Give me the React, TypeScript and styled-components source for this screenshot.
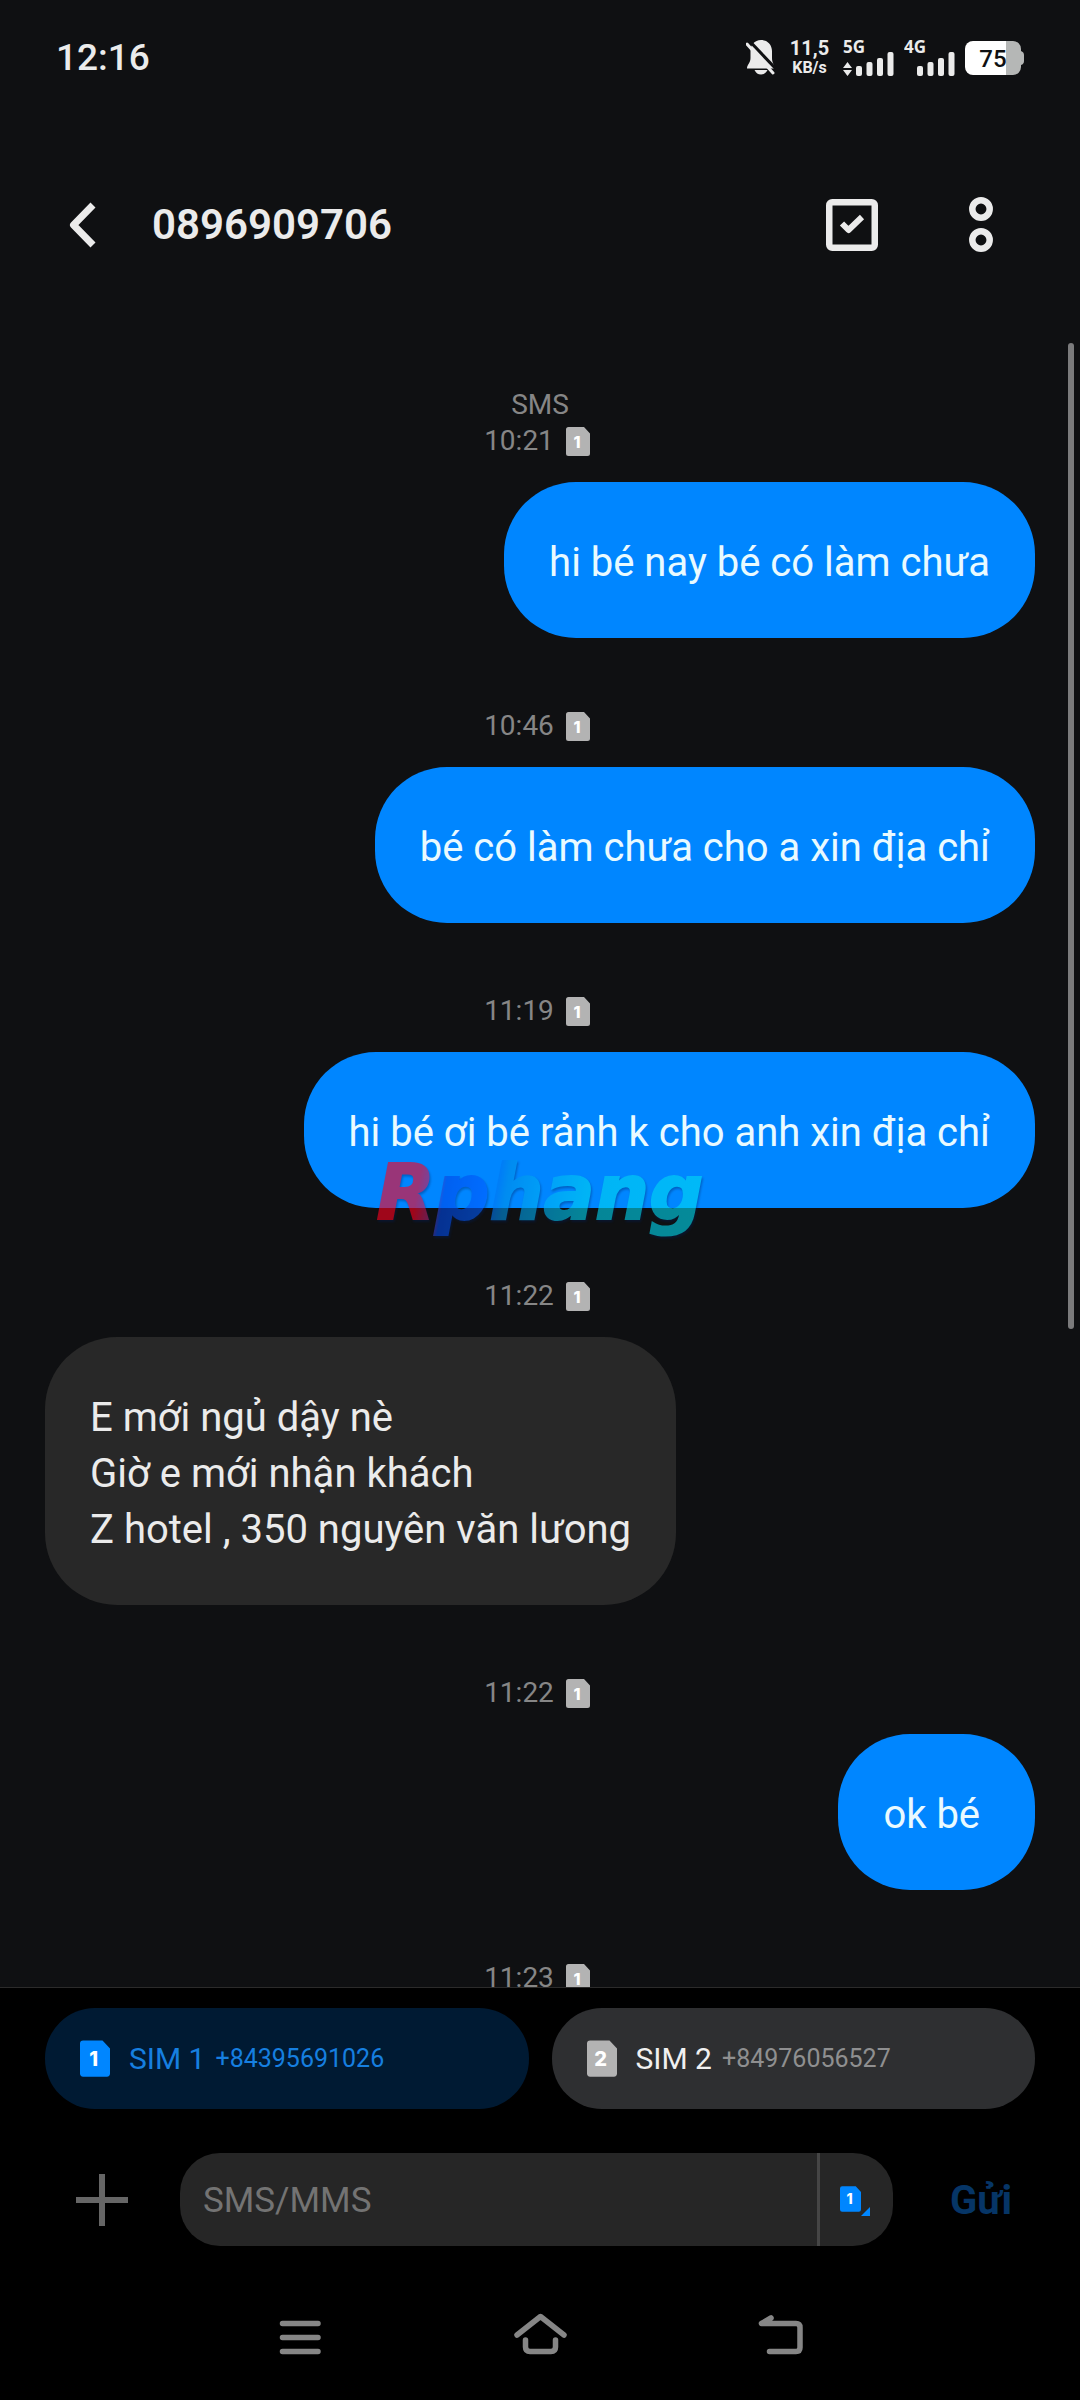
import React from "react";
import styled, { createGlobalStyle } from "styled-components";

const color = {
  page: "#0f1012",
  ink: "#ebebeb",
  muted: "#868686",
  accent: "#0086ff",
  grey: "#b3b3b3",
};

const GlobalStyle = createGlobalStyle`
  *, *::before, *::after { box-sizing: border-box; }
  body {
    margin: 0;
    background: ${color.page};
    color: ${color.ink};
    font-family: Roboto, "Noto Sans", sans-serif;
  }
  button, input { font: inherit; color: inherit; border: 0; background: none; padding: 0; margin: 0; }
  svg { display: block; flex: none; }
  h1, p { margin: 0; }
`;

const Page = styled.div`
  position: relative;
  display: flex;
  flex-direction: column;
  height: 100vh;
  overflow: hidden;
`;

const StatusBar = styled.div`
  display: flex;
  align-items: center;
  flex: none;
  height: 115px;
  padding: 0 56px;
`;

const Clock = styled.time`
  flex: 1;
  font-size: 37px;
  font-weight: 500;
  line-height: 44px;
`;

const StatusIcons = styled.div`
  display: flex;
  align-items: center;
  gap: 10px;
`;

const NetSpeed = styled.div`
  display: flex;
  flex-direction: column;
  align-items: center;
  width: 47px;
  font-weight: 700;
  font-size: 16px;
  line-height: 20px;
`;

const NetValue = styled.span`
  font-size: 20px;
`;

const Header = styled.header`
  display: flex;
  align-items: center;
  flex: none;
  height: 228px;
  padding: 0 35px 8px 45px;
`;

const IconButton = styled.button<{ $width: number }>`
  display: flex;
  align-items: center;
  justify-content: center;
  flex: none;
  width: ${(p) => p.$width}px;
  height: 80px;
`;

const Title = styled.h1`
  flex: 1;
  margin-left: 33px;
  font-size: 42px;
  font-weight: 600;
  line-height: 50px;
`;

const Thread = styled.main`
  position: relative;
  flex: 1;
  min-height: 0;
  overflow: hidden;
  display: flex;
  flex-direction: column;
  gap: 70px;
  padding: 44px 45px 0;
`;

const ScrollThumb = styled.div`
  position: absolute;
  top: 0;
  right: 6px;
  width: 6px;
  height: 60%;
  border-radius: 3px;
  background: #7b7b7c;
`;

const Message = styled.article`
  display: flex;
  flex-direction: column;
  flex: none;
`;

const Meta = styled.div`
  display: flex;
  flex-direction: column;
  align-items: center;
  margin-bottom: 23px;
  color: ${color.muted};
  font-size: 28px;
  line-height: 36px;
`;

const Stamp = styled.div`
  display: flex;
  align-items: center;
  gap: 12px;
  padding-right: 6px;
`;

const Bubble = styled.p<{ $mine: boolean }>`
  align-self: ${(p) => (p.$mine ? "flex-end" : "flex-start")};
  padding: 53px 45px 47px;
  border-radius: 72px;
  background: ${(p) => (p.$mine ? color.accent : "#282828")};
  color: ${(p) => (p.$mine ? "#e9faff" : color.ink)};
  font-size: 40px;
  line-height: 56px;
  white-space: pre-line;
`;

const Footer = styled.footer`
  flex: none;
  border-top: 1px solid #2b2b2b;
  background: #000;
  padding-top: 20px;
`;

const SimRow = styled.div`
  display: grid;
  grid-template-columns: 1fr 1fr;
  gap: 23px;
  padding: 0 45px;
`;

const SimChip = styled.button<{ $active: boolean }>`
  display: flex;
  align-items: center;
  height: 101px;
  padding: 0 35px;
  border-radius: 50px;
  background: ${(p) => (p.$active ? "#001a33" : "#2e2f31")};
  color: ${(p) => (p.$active ? "#167fe0" : "#f0f0f0")};
  font-size: 30px;
  line-height: 36px;
`;

const SimName = styled.span`
  margin: 0 10px 0 19px;
`;

const SimNumber = styled.span<{ $active: boolean }>`
  color: ${(p) => (p.$active ? "inherit" : "#8f8f90")};
  font-size: 25px;
`;

const Compose = styled.form`
  display: flex;
  align-items: center;
  gap: 21px;
  margin-top: 44px;
  padding: 0 32px 0 45px;
`;

const Field = styled.div`
  display: flex;
  flex: 1;
  min-width: 0;
  height: 93px;
  border-radius: 40px;
  overflow: hidden;
  background: #262626;
`;

const Input = styled.input`
  flex: 1;
  min-width: 0;
  padding: 2px 23px 0;
  font-size: 35px;
  outline: none;
  &::placeholder { color: #737373; opacity: 1; }
`;

const SimSwitch = styled.button`
  display: flex;
  align-items: center;
  width: 76px;
  padding: 0 0 2px 20px;
  border-left: 3px solid #454545;
`;

const SendButton = styled.button`
  width: 134px;
  height: 93px;
  padding-top: 2px;
  color: #063566;
  font-size: 40px;
  font-weight: 700;
`;

const NavBar = styled.nav`
  display: grid;
  grid-template-columns: repeat(3, 1fr);
  padding: 62px 180px 32px;
`;

const NavButton = styled.button`
  display: flex;
  justify-content: center;
  height: 60px;
`;

const WatermarkLayer = styled.div`
  position: absolute;
  inset: 0;
  display: grid;
  place-items: center;
  padding-bottom: 14px;
  pointer-events: none;
`;

const Watermark = styled.span`
  font: italic 700 76px/90px "DejaVu Sans", sans-serif;
  color: transparent;
  -webkit-text-stroke: 2px transparent;
  background: linear-gradient(
    100deg,
    #ff0020 14%,
    #a02880 19%,
    #0048e8 22%,
    #005cff 34%,
    #0090e8 40%,
    #00b4f4 52%,
    #00d4f0 64%,
    #00dcf4
  );
  background-clip: text;
  -webkit-background-clip: text;
  filter: drop-shadow(1px 2px 1px rgba(0, 30, 90, 0.6));
  opacity: 0.6;
`;

function SimCard({ slot, height, fill }: { slot: number; height: number; fill: string }) {
  return (
    <svg width={Math.round(height * 0.82)} height={height} viewBox="0 0 24 29" aria-hidden="true">
      <path d="M3 0H18L24 6.500V26.500a2.500 2.500 0 0 1-2.500 2.500H2.500a2.500 2.500 0 0 1-2.500-2.500V2.500a2.500 2.500 0 0 1 2.500-2.500Z" fill={fill} />
      <text
        x="11"
        y="20.500"
        textAnchor="middle"
        fill="#fff"
        fontFamily="Inter, Roboto, sans-serif"
        fontWeight="800"
        fontSize="16"
      >
        {slot}
      </text>
    </svg>
  );
}

function Signal({ label, data }: { label: string; data?: boolean }) {
  return (
    <svg width="51" height="56" viewBox="0 -10 51 56" fill={color.ink} role="img" aria-label={label}>
      <text x="0" y="13" fontFamily='"Noto Sans", sans-serif' fontWeight="700" fontSize="17">
        {label}
      </text>
      {data && <path d="M4.500 22 9 28H0ZM4.500 36 0 30H9Z" />}
      <rect x="13" y="26" width="6" height="10" rx="2" />
      <rect x="23.500" y="22" width="6" height="14" rx="2" />
      <rect x="34" y="18" width="6" height="18" rx="2" />
      <rect x="44.500" y="12" width="6" height="24" rx="2" />
    </svg>
  );
}

function Battery() {
  return (
    <svg width="59" height="34" viewBox="0 0 59 34" role="img" aria-label="75%">
      <path d="M41 0H48a8 8 0 0 1 8 8v2q3 1 3 4v6q0 3-3 4v2a8 8 0 0 1-8 8H41Z" fill="#b5b7b6" />
      <path d="M8 0H41V34H8a8 8 0 0 1-8-8V8a8 8 0 0 1 8-8Z" fill="#fff" />
      <text x="28" y="26" textAnchor="middle" fontWeight="500" fontSize="24" fill="#0f1012">
        75
      </text>
    </svg>
  );
}

function MutedBell() {
  return (
    <svg width="30" height="36" viewBox="0 0 30 36" aria-hidden="true">
      <path
        d="M15 0C8.500 0 4.500 5 4.500 11v7C4.500 23 1 24.500 1 28.500H28.500C28.500 24.500 26 23 26 18V11C26 5 21.500 0 15 0Z"
        fill={color.ink}
      />
      <path d="M8.500 30H21.500C20 33 18 34.500 15 34.500S10 33 8.500 30Z" fill={color.ink} />
      <path d="M4 1.500 30 29" stroke={color.page} strokeWidth="3" />
      <path d="M1 4 27 33" stroke={color.ink} strokeWidth="3" strokeLinecap="round" />
    </svg>
  );
}

interface Sms {
  time: string;
  text: string;
  mine: boolean;
  kind?: string;
}

const messages: Sms[] = [
  { kind: "SMS", time: "10:21", mine: true, text: "hi bé nay bé có làm chưa" },
  { time: "10:46", mine: true, text: "bé có làm chưa cho a xin địa chỉ" },
  { time: "11:19", mine: true, text: "hi bé ơi bé rảnh k cho anh xin địa chỉ" },
  {
    time: "11:22",
    mine: false,
    text: "E mới ngủ dậy nè\nGiờ e mới nhận khách\nZ hotel , 350 nguyên văn lưong",
  },
  { time: "11:22", mine: true, text: "ok bé\u00a0" },
  { time: "11:23", mine: true, text: "" },
];

const sims = [
  { slot: 1, number: "+84395691026", active: true },
  { slot: 2, number: "+84976056527", active: false },
];

const navStroke = {
  fill: "none",
  stroke: "#868686",
  strokeWidth: 5.5,
  strokeLinecap: "round" as const,
  strokeLinejoin: "round" as const,
};

export default function App() {
  return (
    <Page>
      <GlobalStyle />
      <StatusBar>
        <Clock>12:16</Clock>
        <StatusIcons>
          <MutedBell />
          <NetSpeed>
            <NetValue>11,5</NetValue>
            <span>KB/s</span>
          </NetSpeed>
          <Signal label="5G" data />
          <Signal label="4G" />
          <Battery />
        </StatusIcons>
      </StatusBar>

      <Header>
        <IconButton $width={74} aria-label="Quay lại">
          <svg width="28" height="46" viewBox="0 0 28 46" fill="none" stroke={color.ink} strokeWidth="7">
            <path d="M25 3 5.500 23 25 43" strokeLinejoin="round" />
          </svg>
        </IconButton>
        <Title>0896909706</Title>
        <IconButton $width={130} aria-label="Chọn">
          <svg width="52" height="52" viewBox="0 0 52 52" fill="none" stroke={color.ink}>
            <rect x="3.250" y="3.250" width="45.500" height="45.500" rx="3" strokeWidth="6.500" />
            <path d="M16 24.500 22.500 31 36 18" strokeWidth="6" strokeLinejoin="round" />
          </svg>
        </IconButton>
        <IconButton $width={128} aria-label="Thêm">
          <svg width="26" height="56" viewBox="0 0 26 56" fill="none" stroke={color.ink} strokeWidth="6.500">
            <circle cx="13" cy="12" r="8.700" />
            <circle cx="13" cy="43" r="8.700" />
          </svg>
        </IconButton>
      </Header>

      <Thread>
        {messages.map((m, i) => (
          <Message key={i}>
            <Meta>
              {m.kind && <span>{m.kind}</span>}
              <Stamp>
                <time>{m.time}</time>
                <SimCard slot={1} height={29} fill={color.grey} />
              </Stamp>
            </Meta>
            {m.text && <Bubble $mine={m.mine}>{m.text}</Bubble>}
          </Message>
        ))}
        <ScrollThumb />
      </Thread>

      <Footer>
        <SimRow>
          {sims.map((s) => (
            <SimChip key={s.slot} type="button" $active={s.active} aria-pressed={s.active}>
              <SimCard slot={s.slot} height={37} fill={s.active ? color.accent : color.grey} />
              <SimName>SIM {s.slot}</SimName>
              <SimNumber $active={s.active}>{s.number}</SimNumber>
            </SimChip>
          ))}
        </SimRow>
        <Compose onSubmit={(e) => e.preventDefault()}>
          <IconButton type="button" $width={114} aria-label="Đính kèm">
            <svg width="52" height="52" viewBox="0 0 52 52" stroke="#666" strokeWidth="6">
              <path d="M26 0V52M0 26H52" />
            </svg>
          </IconButton>
          <Field>
            <Input type="text" placeholder="SMS/MMS" aria-label="SMS/MMS" />
            <SimSwitch type="button" aria-label="Đổi SIM">
              <SimCard slot={1} height={26} fill={color.accent} />
              <svg width="9" height="36" viewBox="0 0 9 36" aria-hidden="true">
                <path d="M9 26V35H0Z" fill={color.accent} />
              </svg>
            </SimSwitch>
          </Field>
          <SendButton type="submit">Gửi</SendButton>
        </Compose>
        <NavBar>
          <NavButton aria-label="Gần đây">
            <svg width="60" height="60" viewBox="0 0 60 60" {...navStroke}>
              <path d="M12.500 15.500H48M12.500 29.500H48M12.500 43.500H48" />
            </svg>
          </NavButton>
          <NavButton aria-label="Trang chủ">
            <svg width="60" height="60" viewBox="0 0 60 60" {...navStroke}>
              <path d="M7 27 30.500 8.500 54 27M15.500 32V39q0 4.500 4.500 4.500H41q4.500 0 4.500-4.500V32" />
            </svg>
          </NavButton>
          <NavButton aria-label="Trở về">
            <svg width="60" height="60" viewBox="0 0 60 60" {...navStroke}>
              <path d="M21 10 11.500 15.500H46q4 0 4 4V39.500q0 4-4 4H19.500" />
            </svg>
          </NavButton>
        </NavBar>
      </Footer>

      <WatermarkLayer>
        <Watermark>Rphang</Watermark>
      </WatermarkLayer>
    </Page>
  );
}
